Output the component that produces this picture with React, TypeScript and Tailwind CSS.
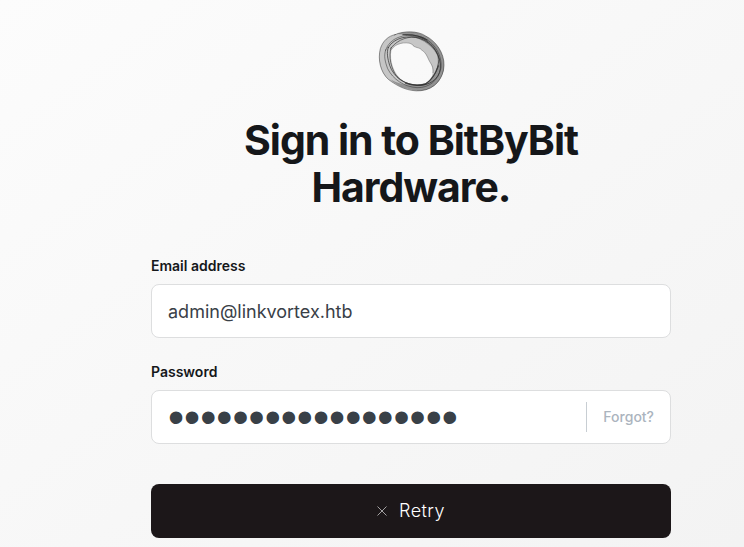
import React, { useState } from 'react';

function Orb() {
  return (
    <svg viewBox="0 0 240 240" className="h-20 w-20" role="img" aria-label="BitByBit Hardware">
      {/* Translucent ring with a wavy inner edge */}
      <path
        fillRule="evenodd"
        fill="#c6c6c6"
        d="M72 38C98 26 140 26 164 42C196 58 220 94 219 130C218 168 192 202 150 206C112 210 78 192 52 172C28 150 20 112 28 80C36 56 52 42 72 38Z
           M62 82C72 64 104 58 122 66C132 80 144 74 152 84C168 94 170 110 178 122C188 138 188 160 176 176C160 190 122 190 98 178C70 160 54 116 62 82Z"
      />
      {/* Darker band on the right and along the bottom */}
      <path
        fill="#808080"
        fillOpacity="0.75"
        d="M78 36C108 24 148 30 170 46C206 70 224 104 218 146C206 190 176 206 140 206C100 202 76 190 58 172C90 190 136 198 168 184C194 166 206 130 198 100C182 62 128 38 78 36Z"
      />
      {/* Thin strands */}
      <g fill="none" stroke="#2b2b2b" strokeLinecap="round">
        <path strokeWidth="3" strokeOpacity="0.5" d="M72 38C98 26 140 26 164 42C196 58 220 94 219 130C218 168 192 202 150 206C112 210 78 192 52 172C28 150 20 112 28 80C36 56 52 42 72 38Z" />
        <path strokeWidth="3" strokeOpacity="0.7" d="M52 76C70 46 112 38 148 50C184 62 212 102 208 140C204 172 174 192 140 190C102 188 68 166 56 130C50 110 46 92 52 76Z" />
        <path strokeWidth="3" strokeOpacity="0.5" d="M44 84C56 48 98 34 140 42C186 52 214 96 210 138C202 176 174 198 138 197C98 194 66 172 50 140C42 118 38 102 44 84Z" />
        <path strokeWidth="3" strokeOpacity="0.6" d="M60 78C82 50 114 42 146 46C176 56 200 84 204 112C200 148 186 172 162 186C130 194 96 184 78 164C60 140 52 104 60 78Z" />
        <path strokeWidth="2" strokeOpacity="0.5" d="M62 82C72 64 104 58 122 66C132 80 144 74 152 84C168 94 170 110 178 122C184 130 188 142 186 152" />
        <path strokeWidth="4" strokeOpacity="0.7" d="M96 38C126 36 152 44 168 54M104 184C126 192 146 192 164 186C182 174 194 154 202 132" />
      </g>
    </svg>
  );
}

export default function App() {
  const [email, setEmail] = useState('admin@linkvortex.htb');
  const [password, setPassword] = useState('correcthorsebatter');

  return (
    <main className="flex min-h-screen justify-center bg-linear-to-br from-[#fcfcfc] to-[#f3f3f3] pt-[22px] pb-2 pl-[78px] font-['Inter',sans-serif] text-[#15171a]">
      <form className="flex w-full max-w-[520px] flex-col" onSubmit={(e) => e.preventDefault()}>
        <header className="flex flex-col items-center text-center">
          <Orb />
          <h1 className="mt-[15px] text-[41px] leading-[47px] font-bold tracking-tight">
            Sign in to BitByBit<br /> Hardware.
          </h1>
        </header>

        <div className="mt-[45px]">
          <label htmlFor="email" className="block text-sm font-semibold">Email address</label>
          <input
            id="email"
            type="email"
            value={email}
            onChange={(e) => setEmail(e.target.value)}
            className="mt-2 h-[54px] w-full rounded-lg border border-[#dddedf] bg-white px-4 text-lg text-[#394047] outline-none"
          />
        </div>

        <div className="mt-6">
          <label htmlFor="password" className="block text-sm font-semibold">Password</label>
          <div className="mt-2 flex h-[54px] items-center rounded-lg border border-[#dddedf] bg-white px-4">
            <input
              id="password"
              type="password"
              value={password}
              onChange={(e) => setPassword(e.target.value)}
              className="h-full min-w-0 flex-1 bg-transparent font-['Liberation_Sans',sans-serif] text-[46px] text-[#394047] outline-none"
            />
            <button type="button" className="h-[30px] border-l border-[#c8ced3] pl-4 text-sm font-medium text-[#abb4be]">
              Forgot?
            </button>
          </div>
        </div>

        <button type="submit" className="mt-10 flex h-[54px] w-full items-center justify-center gap-3 rounded-lg bg-[#1c1719] text-lg font-light tracking-wide text-white">
          <svg viewBox="0 0 10 10" className="h-2.5 w-2.5" fill="none" stroke="currentColor" strokeWidth="0.6" aria-hidden="true">
            <path d="M0.5 0.5L9.5 9.5M9.5 0.5L0.5 9.5" />
          </svg>
          Retry
        </button>
      </form>
    </main>
  );
}
